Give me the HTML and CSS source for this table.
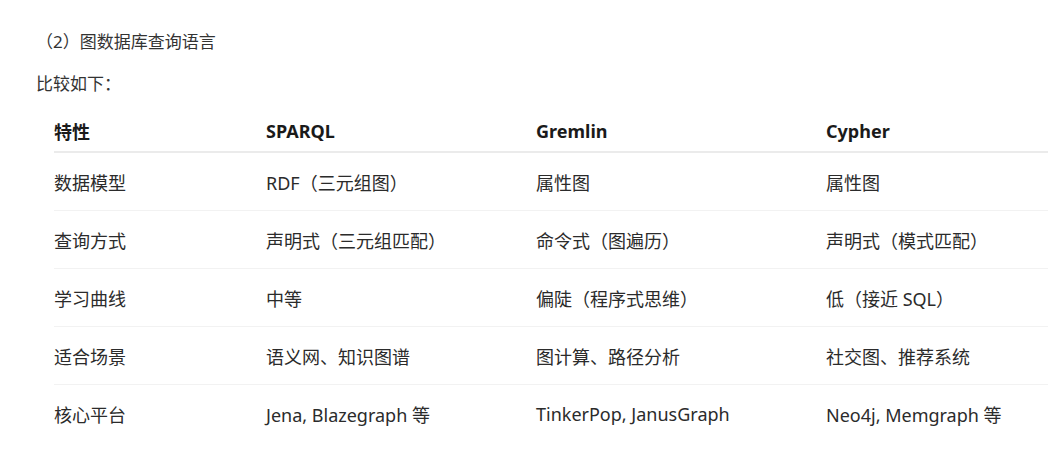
FILE: index.html
```html
<!DOCTYPE html>
<html lang="zh-CN">
<head>
<meta charset="utf-8">
<link rel="stylesheet" href="styles.css">
</head>
<body>
<div class="page">
  <p class="heading">（2）图数据库查询语言</p>
  <p class="lead">比较如下：</p>
  <table class="cmp">
    <colgroup>
      <col class="c1"><col class="c2"><col class="c3"><col class="c4">
    </colgroup>
    <thead>
      <tr><th>特性</th><th>SPARQL</th><th>Gremlin</th><th>Cypher</th></tr>
    </thead>
    <tbody>
      <tr><td>数据模型</td><td>RDF（三元组图）</td><td>属性图</td><td>属性图</td></tr>
      <tr><td>查询方式</td><td>声明式（三元组匹配）</td><td>命令式（图遍历）</td><td>声明式（模式匹配）</td></tr>
      <tr><td>学习曲线</td><td>中等</td><td>偏陡（程序式思维）</td><td>低（接近 SQL）</td></tr>
      <tr><td>适合场景</td><td>语义网、知识图谱</td><td>图计算、路径分析</td><td>社交图、推荐系统</td></tr>
      <tr><td>核心平台</td><td>Jena, Blazegraph 等</td><td>TinkerPop, JanusGraph</td><td>Neo4j, Memgraph 等</td></tr>
    </tbody>
  </table>
</div>
</body>
</html>
```

FILE: styles.css
```css
html, body {
  margin: 0;
  padding: 0;
  background: #ffffff;
}
body {
  font-family: "Noto Sans", "Noto Sans CJK SC", sans-serif;
  color: #262626;
}
.page {
  padding: 28px 0 0 36px;
}
.heading {
  margin: 0;
  font-size: 17px;
  line-height: 28px;
  color: #333333;
}
.lead {
  margin: 14px 0 0 0;
  font-size: 17px;
  line-height: 28px;
  color: #333333;
}
.cmp {
  margin: 12px 0 0 18px;
  border-collapse: collapse;
  table-layout: fixed;
  width: 994px;
  font-size: 18px;
}
.c1 { width: 212px; }
.c2 { width: 270px; }
.c3 { width: 290px; }
.c4 { width: 222px; }
.cmp th {
  text-align: left;
  font-weight: 700;
  color: #1a1a1a;
  padding: 0;
  height: 41px;
  border-bottom: 2px solid #ebebeb;
  vertical-align: middle;
}
.cmp td {
  padding: 0;
  height: 57px;
  border-bottom: 1px solid #f2f2f2;
  vertical-align: middle;
  color: #2b2b2b;
  white-space: nowrap;
}
.cmp tbody tr:last-child td {
  border-bottom: none;
}
```
